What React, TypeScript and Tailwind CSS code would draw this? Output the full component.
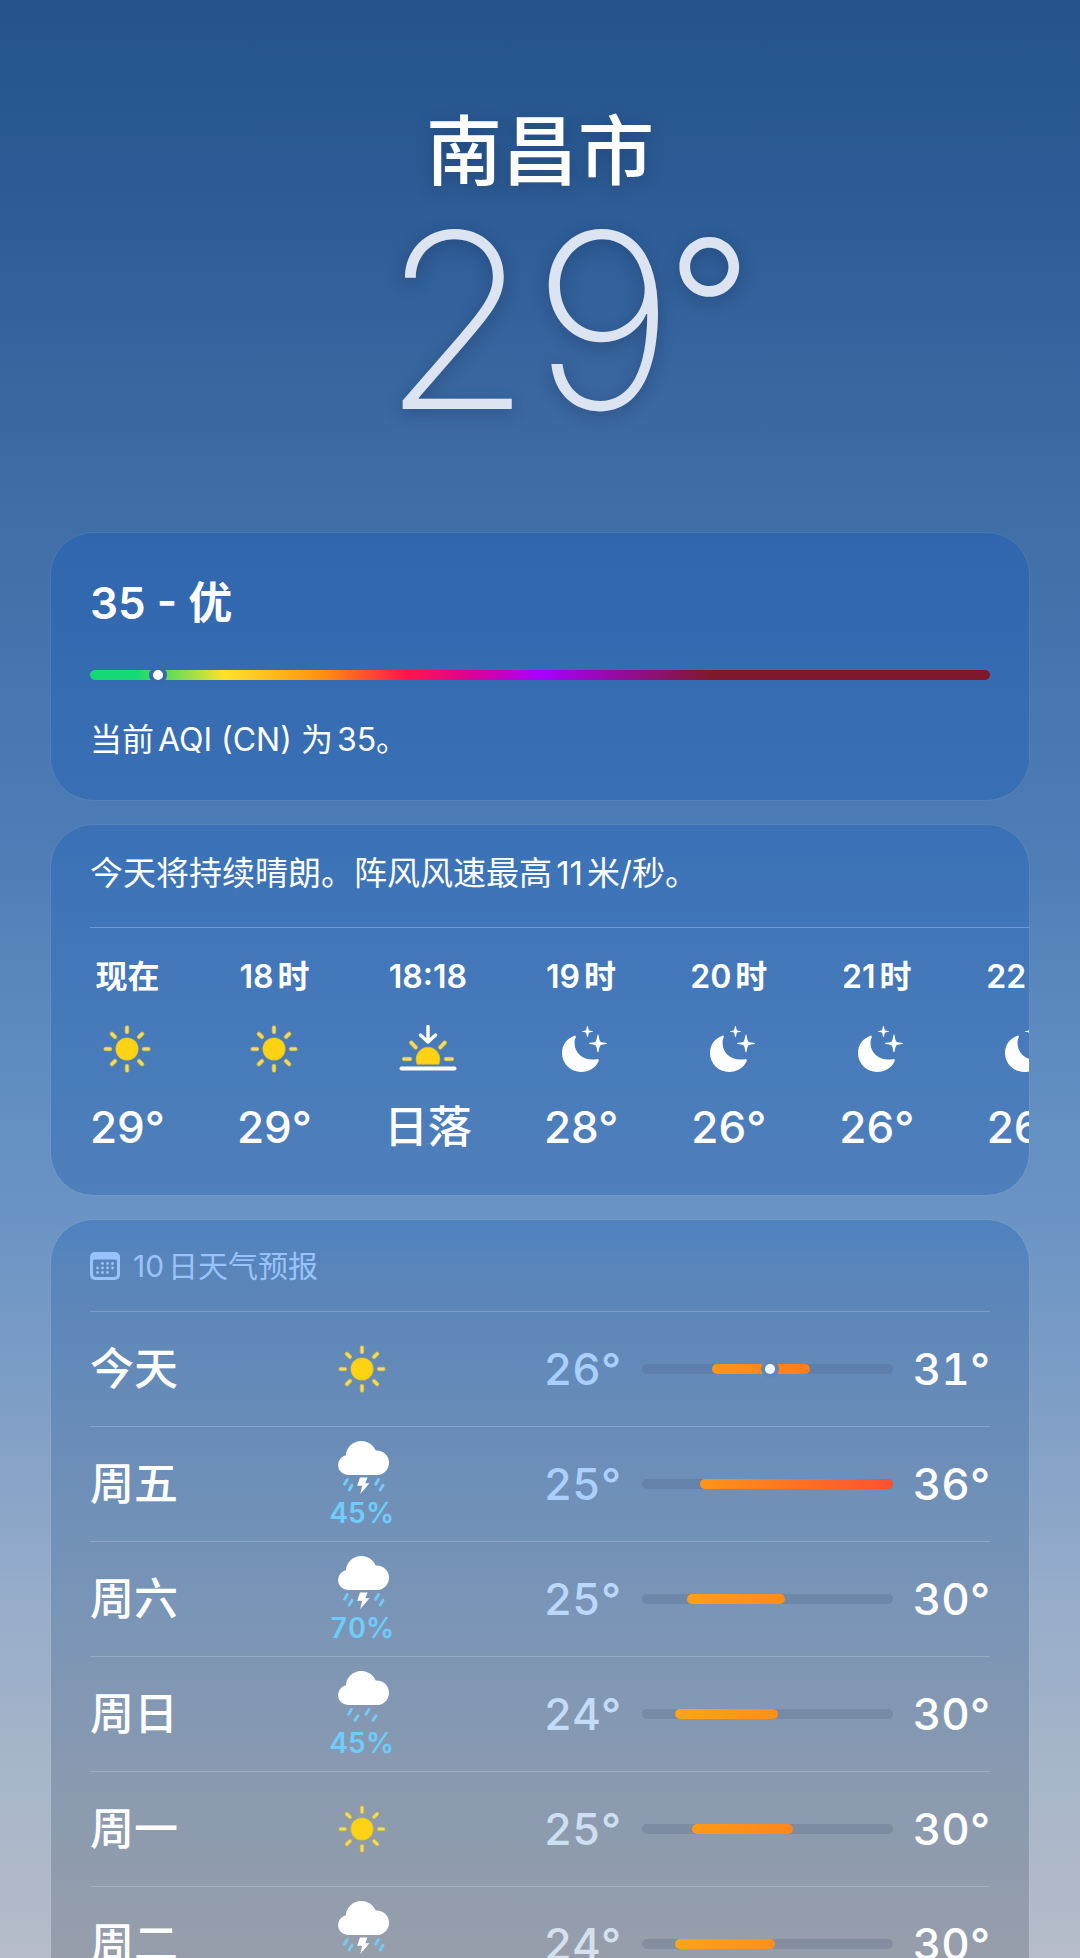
import type { ReactNode } from "react";

type Sky = "sun" | "sunset" | "moon" | "storm" | "rain";

const hours: { time: string; sky: Sky; value: string }[] = [
  { time: "现在", sky: "sun", value: "29°" },
  { time: "18时", sky: "sun", value: "29°" },
  { time: "18:18", sky: "sunset", value: "日落" },
  { time: "19时", sky: "moon", value: "28°" },
  { time: "20时", sky: "moon", value: "26°" },
  { time: "21时", sky: "moon", value: "26°" },
  { time: "22时", sky: "moon", value: "26°" },
];

type Day = {
  name: string;
  sky: Sky;
  chance?: string;
  low: number;
  high: number;
  lowColor: string;
  // start and end of the coloured range, in percent of the track
  start: number;
  end: number;
  from: string;
  to: string;
  now?: number;
};

const days: Day[] = [
  { name: "今天", sky: "sun", low: 26, high: 31, lowColor: "text-[#a9d0fd]", start: 28, end: 67, from: "#ff951c", to: "#fb7d20", now: 51 },
  { name: "周五", sky: "storm", chance: "45%", low: 25, high: 36, lowColor: "text-[#acd0fd]", start: 23, end: 100, from: "#ff9418", to: "#fc5030" },
  { name: "周六", sky: "storm", chance: "70%", low: 25, high: 30, lowColor: "text-[#b9d8fb]", start: 18, end: 57, from: "#ff9f16", to: "#fc8c1c" },
  { name: "周日", sky: "rain", chance: "45%", low: 24, high: 30, lowColor: "text-[#c3dcf8]", start: 13, end: 54, from: "#fda418", to: "#fc8f1c" },
  { name: "周一", sky: "sun", low: 25, high: 30, lowColor: "text-[#cde0f3]", start: 20, end: 60, from: "#ff9a16", to: "#fd871c" },
  { name: "周二", sky: "storm", chance: "60%", low: 24, high: 30, lowColor: "text-[#d5e1ef]", start: 13, end: 53, from: "#fda418", to: "#fc8f1c" },
];

const Sun = () => (
  <svg width="48" height="48" viewBox="0 0 48 48" aria-hidden="true">
    {[0, 45, 90, 135, 180, 225, 270, 315].map((deg) => (
      <g key={deg} transform={`rotate(${deg} 24 24)`} strokeLinecap="round">
        <path d="M24 2.6v4.4" stroke="#c3ab35" strokeWidth="4.6" />
        <path d="M24 2.6v4.4" stroke="#ebdc74" strokeWidth="3" />
      </g>
    ))}
    <circle cx="24" cy="24" r="11.6" fill="#d2b93c" />
    <circle cx="24" cy="24" r="10.8" fill="#fdd314" />
  </svg>
);

const Sunset = () => (
  <svg width="58" height="48" viewBox="0 0 58 48" fill="none" strokeLinecap="round" strokeLinejoin="round" aria-hidden="true">
    <path d="M29 1.5v15M21.5 10l7.5 7 7.5-7" stroke="#fff" strokeWidth="3.4" />
    <path d="M5 34h6M47 34h6M12.2 17.6l4.6 4.8M45.8 17.6l-4.6 4.8" stroke="#c3ab35" strokeWidth="4.6" />
    <path d="M5 34h6M47 34h6M12.2 17.6l4.6 4.8M45.8 17.6l-4.6 4.8" stroke="#ebdc74" strokeWidth="3" />
    <path d="M18 39a12 12 0 1 1 22 0z" fill="#fdd314" stroke="#d2b93c" strokeWidth="0.8" />
    <path d="M2.5 43.5h53" stroke="#fff" strokeWidth="4" />
  </svg>
);

const Moon = () => (
  <svg width="52" height="48" viewBox="-7 -1 52 48" fill="#fff" aria-hidden="true">
    <path d="M12.4 9.7C4.8 12.3 0 19 0 27a19 19 0 0 0 19 19c8 0 14.7-4.2 17.6-10.8.6-1.5-.2-2.4-1.6-2C22 35.500 12.500 28 12.500 16.500c0-1.800.4-3.300 1.100-5 .5-1.200 0-2.200-1.200-1.800z" />
    <path d="M25.5 0c.8 0 .8 3.500 1.600 4.300s3.900.6 3.900 1.200-3.100.5-3.900 1.200-.8 4.300-1.600 4.300-.8-3.500-1.600-4.300S20 6.100 20 5.500s3.100-.4 3.900-1.200S24.700 0 25.500 0z" />
    <path d="M36 8.500c1 0 1 5.700 2.300 7s6.700 1 6.700 1.900-5.400.7-6.700 2-1.300 6.900-2.300 6.900-1-5.600-2.300-6.900-6.700-1-6.700-2 5.400-.6 6.700-1.900 1.300-7 2.300-7z" />
  </svg>
);

const Cloud = ({ bolt }: { bolt: boolean }) => (
  <svg width="56" height="56" viewBox="-4 -2 56 56" aria-hidden="true">
    <g fill="#fff">
      <circle cx="23.3" cy="15.5" r="15.5" />
      <circle cx="10" cy="24" r="10" />
      <circle cx="38.7" cy="21.7" r="12.3" />
      <path d="M10 18h28v16H10z" />
    </g>
    {bolt && <path d="M22 36.5h7.500l-2.300 5.700h4.300L22.200 53l2-8.200h-5z" fill="#fff" />}
    <path
      d={
        bolt
          ? "M9.3 38.5l-2.8 4.7M14 44.2l-2.8 4.7M40.5 38.5l-2.8 4.7M45 44.2l-2.8 4.7"
          : "M13.5 38.5l-3 4.7M20 44.7l-3 4.7M31 38.5l-3 4.7M38 44.7l-3 4.7"
      }
      stroke="#74cbf3"
      strokeWidth="3"
      strokeLinecap="round"
    />
  </svg>
);

const CalendarIcon = () => (
  <svg width="30" height="28" viewBox="0 0 30 28" fill="#98c3fa" aria-hidden="true">
    <path
      fillRule="evenodd"
      d="M5 0h20a5 5 0 0 1 5 5v18a5 5 0 0 1-5 5H5a5 5 0 0 1-5-5V5a5 5 0 0 1 5-5zM3 9.5V22a3 3 0 0 0 3 3h18a3 3 0 0 0 3-3V9.500a2 2 0 0 0-2-2H5a2 2 0 0 0-2 2z"
    />
    {[12, 17, 22].map((x) => <circle key={x} cx={x + 0.5} cy="11.5" r="1.4" />)}
    {[7, 12, 17, 22].map((x) => <circle key={x} cx={x + 0.5} cy="16" r="1.4" />)}
    {[7, 12, 17].map((x) => <circle key={x} cx={x + 0.5} cy="20.5" r="1.4" />)}
  </svg>
);

const icons: Record<Sky, ReactNode> = {
  sun: <Sun />,
  sunset: <Sunset />,
  moon: <Moon />,
  storm: <Cloud bolt />,
  rain: <Cloud bolt={false} />,
};

const Header = () => (
  <header className="flex flex-col items-center pt-[103px] [text-shadow:0_4px_16px_rgba(20,40,80,0.35)]">
    <h1 className="text-[76px] leading-[96px] font-medium">南昌市</h1>
    {/* the degree sign hangs outside so the digits stay centred */}
    <p className="relative mr-[24px] text-[244px] leading-none font-extralight text-[#dce4f1]">
      29
      <span className="absolute top-0 left-full -ml-2 text-[188px] leading-[216px] font-light">°</span>
    </p>
  </header>
);

const AirQuality = () => (
  <section className="rounded-[42px] bg-linear-to-b from-[#2f66ad] to-[#3970b5] px-[39px] pt-[46px] pb-[40px] ring-1 ring-white/5">
    <h2 className="text-[44px] leading-[48px] font-semibold">35 - 优</h2>
    <div className="relative mt-[43px] h-[10px] rounded-full bg-[linear-gradient(to_right,#14d975_0%,#14d975_5%,#66dc58_9%,#ffe22b_15%,#ff8e10_26%,#ff1748_35%,#d8009a_43%,#a800ff_50%,#80182c_69%,#80182c_100%)]">
      <span className="absolute top-0 left-[7%] size-[10px] rounded-full bg-white ring-4 ring-[#3669ae]" />
    </div>
    <p className="mt-[40px] text-[32px] leading-[40px]">当前AQI (CN) 为35。</p>
  </section>
);

const Hourly = () => (
  <section className="overflow-hidden rounded-[42px] bg-linear-to-b from-[#3a71b6] via-[#4579ba] to-[#5080bb] pt-[28px] pb-[44px] pl-[39px] ring-1 ring-white/5">
    <p className="text-[33px] leading-[40px]">今天将持续晴朗。阵风风速最高11米/秒。</p>
    <ul className="mt-[34px] flex gap-[72px] border-t border-[#6c9bd8] pt-[29px]">
      {hours.map((h) => (
        <li key={h.time} className="flex min-w-[72px] shrink-0 flex-col items-center whitespace-nowrap">
          <span className="text-[32px] leading-[40px] font-semibold">{h.time}</span>
          <span className="mt-[28px] flex h-[48px] items-center">{icons[h.sky]}</span>
          <span className="mt-[30px] text-[44px] leading-[48px] font-medium">{h.value}</span>
        </li>
      ))}
    </ul>
  </section>
);

const DayRow = ({ day }: { day: Day }) => (
  <li className="grid h-[115px] grid-cols-[240px_64px_227px_1fr_97px] items-center border-t border-white/20 tabular-nums">
    <span className="text-[44px] leading-[48px] font-medium">{day.name}</span>
    <span className="flex flex-col items-center">
      {icons[day.sky]}
      {day.chance && <span className="mt-[2px] text-[28px] leading-[32px] font-semibold text-[#6fcdfb]">{day.chance}</span>}
    </span>
    <span className={`text-right text-[44px] leading-[48px] font-medium ${day.lowColor}`}>{day.low}°</span>
    <div className="relative ml-[21px] h-[10px] rounded-full bg-[#4b6080]/25">
      <div
        className="absolute inset-y-0 rounded-full"
        style={{
          left: `${day.start}%`,
          width: `${day.end - day.start}%`,
          background: `linear-gradient(to right, ${day.from}, ${day.to})`,
        }}
      />
      {day.now && (
        <span
          className="absolute top-0 size-[10px] -translate-x-1/2 rounded-full bg-white ring-4 ring-[#6087b7]"
          style={{ left: `${day.now}%` }}
        />
      )}
    </div>
    <span className="text-right text-[44px] leading-[48px] font-medium">{day.high}°</span>
  </li>
);

const Forecast = () => (
  <section className="rounded-[42px] bg-[linear-gradient(to_bottom,#4f82c0_0px,#5985ba_50px,#668bb8_180px,#7593b8_340px,#8799b1_530px,#969eab_730px)] px-[39px] pt-[26px] ring-1 ring-white/5">
    <h2 className="flex items-center gap-[13px] text-[30px] leading-[40px] text-[#98c3fa]">
      <CalendarIcon />
      10日天气预报
    </h2>
    <ul className="mt-[25px]">
      {days.map((d) => (
        <DayRow key={d.name} day={d} />
      ))}
    </ul>
  </section>
);

const App = () => (
  <div
    lang="zh-CN"
    className="h-screen overflow-y-auto bg-[linear-gradient(to_bottom,#24548b_0%,#2e5d97_12%,#3c69a2_22%,#4170a9_28%,#4c7bb5_42%,#5d8bc0_53%,#6a94c4_62%,#82a0c7_73%,#95acca_81%,#a6b5c9_90%,#b6bcc9_100%)] font-['Inter','Noto_Sans_CJK_SC',sans-serif] text-white [scrollbar-width:none] [text-autospace:normal]"
  >
    <Header />
    <main className="mx-[51px] mt-[90px] flex flex-col gap-[25px]">
      <AirQuality />
      <Hourly />
      <Forecast />
    </main>
  </div>
);

export default App;
